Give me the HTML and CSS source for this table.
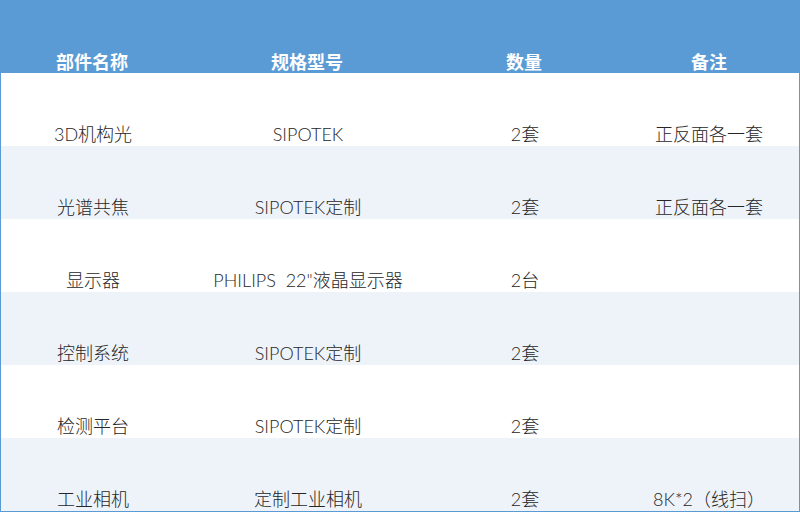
FILE: index.html
```html
<!DOCTYPE html>
<html lang="zh-CN">
<head>
<meta charset="utf-8">
<title>部件清单</title>
<link rel="stylesheet" href="styles.css">
</head>
<body>
<div class="sheet">
  <div class="row head">
    <div class="cell">部件名称</div>
    <div class="cell">规格型号</div>
    <div class="cell">数量</div>
    <div class="cell">备注</div>
  </div>
  <div class="row">
    <div class="cell">3D机构光</div>
    <div class="cell">SIPOTEK</div>
    <div class="cell">2套</div>
    <div class="cell">正反面各一套</div>
  </div>
  <div class="row alt">
    <div class="cell">光谱共焦</div>
    <div class="cell">SIPOTEK定制</div>
    <div class="cell">2套</div>
    <div class="cell">正反面各一套</div>
  </div>
  <div class="row">
    <div class="cell">显示器</div>
    <div class="cell">PHILIPS&nbsp; 22"液晶显示器</div>
    <div class="cell">2台</div>
    <div class="cell"></div>
  </div>
  <div class="row alt">
    <div class="cell">控制系统</div>
    <div class="cell">SIPOTEK定制</div>
    <div class="cell">2套</div>
    <div class="cell"></div>
  </div>
  <div class="row">
    <div class="cell">检测平台</div>
    <div class="cell">SIPOTEK定制</div>
    <div class="cell">2套</div>
    <div class="cell"></div>
  </div>
  <div class="row alt">
    <div class="cell">工业相机</div>
    <div class="cell">定制工业相机</div>
    <div class="cell">2套</div>
    <div class="cell">8K*2（线扫）</div>
  </div>
</div>
</body>
</html>
```

FILE: styles.css
```css
html, body {
  margin: 0;
  padding: 0;
  background: #ffffff;
}

.sheet {
  width: 800px;
  box-sizing: border-box;
  border-left: 1px solid #5b9bd5;
  border-right: 1px solid #5b9bd5;
  border-bottom: 1px solid #5b9bd5;
  font-family: Lato, "Noto Sans CJK SC", sans-serif;
  font-size: 18px;
  font-weight: 300;
  color: #262626;
}

.row {
  display: grid;
  grid-template-columns: 184px 246px 188px 1fr;
  height: 73px;
  background: #ffffff;
}

.row.alt {
  background: #eef3fa;
}

.row.head {
  background: #5b9bd5;
  color: #ffffff;
  font-family: "Noto Sans CJK SC", sans-serif;
  font-weight: bold;
  margin: 0 -1px;
}

.cell {
  display: flex;
  align-items: flex-end;
  justify-content: center;
  line-height: 24px;
  white-space: nowrap;
}
```
